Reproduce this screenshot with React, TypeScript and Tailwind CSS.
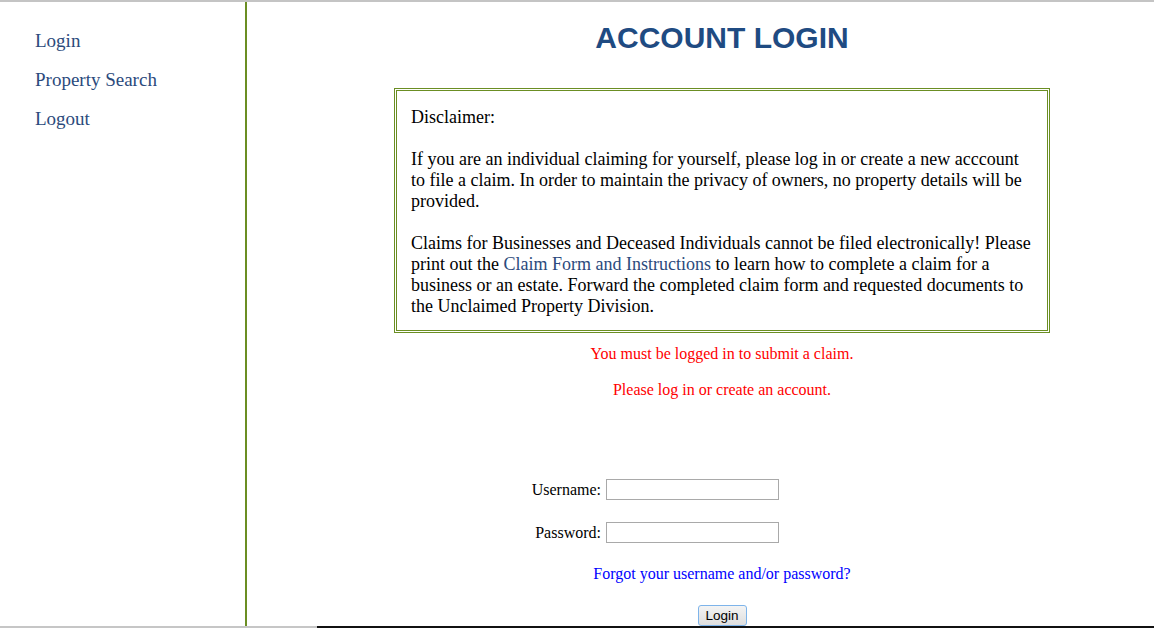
import React from 'react';

const navLinks = ['Login', 'Property Search', 'Logout'];

export default function App() {
  return (
    <div className="w-[1154px] h-[628px] bg-white overflow-hidden flex flex-col font-['Liberation_Serif','Times_New_Roman',serif] text-black">
      <div className="h-[2px] bg-[#c4c4c4]" />
      <div className="flex h-[624px]">
        {/* sidebar */}
        <nav className="w-[247px] shrink-0 border-r-2 border-[#6b8e23] pt-[19px] pl-[35px]">
          <ul>
            {navLinks.map((link) => (
              <li key={link} className="text-[19px] leading-[39px]">
                <a href="#" className="text-[#2b4a7c]">{link}</a>
              </li>
            ))}
          </ul>
        </nav>

        {/* main */}
        <main className="flex-1 pl-[43px] pt-[19px] flex flex-col items-center">
          <h1 className="font-['Liberation_Sans',Arial,sans-serif] font-bold text-[30px] leading-[34px] text-[#1f4b82]">
            ACCOUNT LOGIN
          </h1>

          <div className="mt-[33px] w-[656px] border-[3px] border-double border-[#6b8e23] px-[14px] pt-[16px] pb-[13px] text-[18px] leading-[21px]">
            Disclaimer:
            <br />
            <br />
            If you are an individual claiming for yourself, please log in or create a new acccount to file a claim. In order to maintain the privacy of owners, no property details will be provided.
            <br />
            <br />
            Claims for Businesses and Deceased Individuals cannot be filed electronically! Please print out the{' '}
            <a href="#" className="text-[#2b4a7c]">Claim Form and Instructions</a> to learn how to complete a claim for a business or an estate. Forward the completed claim form and requested documents to the Unclaimed Property Division.
          </div>

          <p className="mt-[11px] text-[16px] leading-[20px] text-[#ff0000]">You must be logged in to submit a claim.</p>
          <p className="mt-[16px] text-[16px] leading-[20px] text-[#ff0000]">Please log in or create an account.</p>

          <form className="mt-[79px] self-stretch flex flex-col items-center">
            <div className="self-start grid grid-cols-[311px_173px] gap-x-[5px] gap-y-[22px] text-[16px]">
              <label className="h-[21px] flex items-center justify-end">Username:</label>
              <input type="text" className="h-[21px] w-[173px] border border-[#a9a9a9] bg-white outline-none" />
              <label className="h-[21px] flex items-center justify-end">Password:</label>
              <input type="password" className="h-[21px] w-[173px] border border-[#a9a9a9] bg-white outline-none" />
            </div>
            <a href="#" className="mt-[21px] text-[16px] leading-[20px] text-[#0000ff]">
              Forgot your username and/or password?
            </a>
            <button
              type="button"
              className="mt-[21px] w-[49px] h-[21px] rounded-[3px] border border-[#7eb4ea] bg-linear-to-b from-[#f4f4f4] to-[#dedede] font-['Liberation_Sans',Arial,sans-serif] text-[13.5px] leading-[19px] text-black"
            >
              Login
            </button>
          </form>
        </main>
      </div>
      <div className="h-[2px] flex">
        <div className="w-[317px] bg-[#c6c6c6]" />
        <div className="flex-1 bg-[#111111]" />
      </div>
    </div>
  );
}
